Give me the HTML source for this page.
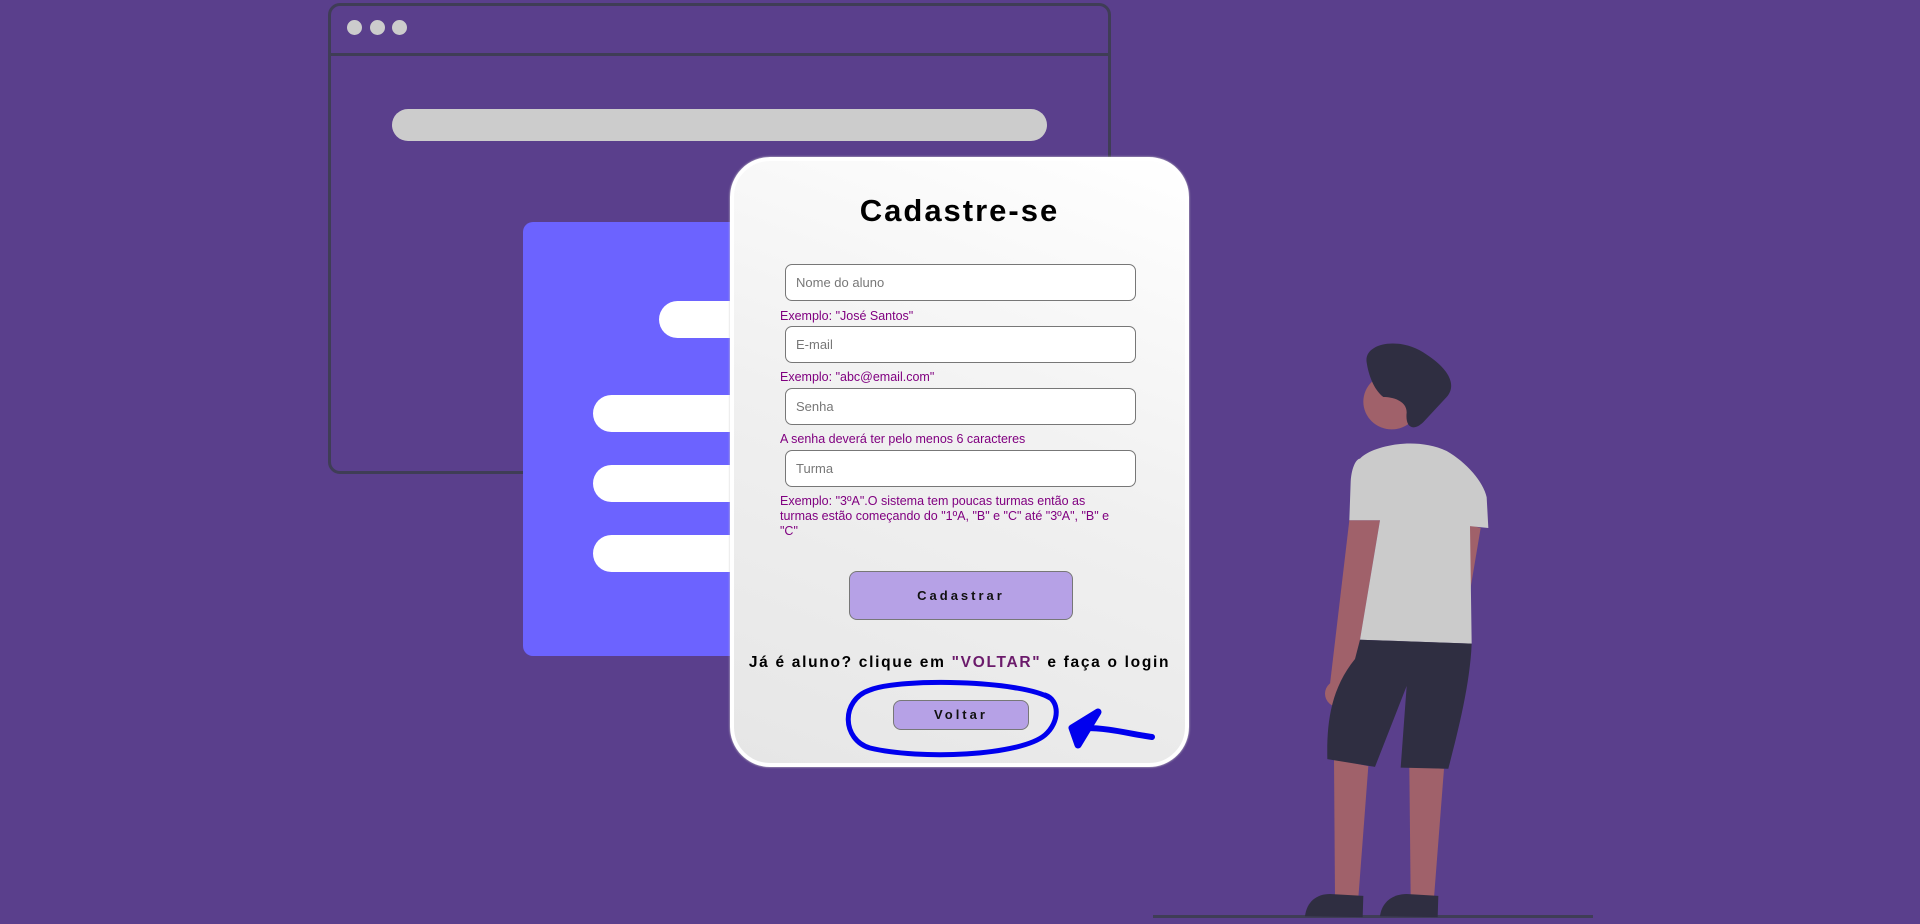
<!DOCTYPE html>
<html><head><meta charset="utf-8"><style>
*{margin:0;padding:0;box-sizing:border-box}
body{width:1920px;height:924px;background:#5a3f8c;position:relative;overflow:hidden;font-family:"Liberation Sans",sans-serif}
.abs{position:absolute}
.win{left:328px;top:3px;width:783px;height:471px;border:3px solid #3f3d56;border-radius:12px}
.bar{left:331px;top:53px;width:777px;height:3px;background:#3f3d56}
.dot{width:15px;height:15px;border-radius:50%;background:#ccc;top:20px}
.wb{background:#fff;border-radius:20px;height:37px}
.card{left:730px;top:157px;width:459px;height:610px;border:4px solid #fff;border-radius:40px;background:linear-gradient(200deg,#fff 0%,#f0f0f0 50%,#e6e6e6 100%);box-shadow:0 0 2px #ccc}
h1{position:absolute;left:0;right:0;top:32px;text-align:center;font-size:31px;letter-spacing:2px;font-weight:bold;color:#000}
.in{position:absolute;left:51px;width:351px;height:37px;border:1px solid #777;border-radius:7px;background:#fff;font-size:13px;color:#777;padding:10px 10px}
.hint{position:absolute;left:46px;font-size:12.5px;color:#800080;line-height:15px;width:345px}
.btn{position:absolute;background:#b6a1e6;border:1px solid #777;border-radius:8px;font-weight:bold;letter-spacing:3px;color:#111;text-align:center}
</style></head><body>
<div class="abs win"></div><div class="abs bar"></div>
<div class="abs dot" style="left:347px"></div><div class="abs dot" style="left:370px"></div><div class="abs dot" style="left:392px"></div>
<div class="abs" style="left:392px;top:109px;width:655px;height:32px;border-radius:16px;background:#ccc"></div>
<div class="abs" style="left:523px;top:222px;width:260px;height:434px;border-radius:10px;background:#6c63ff"></div>
<div class="abs wb" style="left:659px;top:301px;width:200px"></div>
<div class="abs wb" style="left:593px;top:395px;width:200px"></div>
<div class="abs wb" style="left:593px;top:465px;width:200px"></div>
<div class="abs wb" style="left:593px;top:535px;width:200px"></div>
<div class="abs card">
<h1>Cadastre-se</h1>
<div class="in" style="top:103px">Nome do aluno</div>
<div class="hint" style="top:148px">Exemplo: "José Santos"</div>
<div class="in" style="top:165px">E-mail</div>
<div class="hint" style="top:209px">Exemplo: "abc@email.com"</div>
<div class="in" style="top:227px">Senha</div>
<div class="hint" style="top:271px">A senha deverá ter pelo menos 6 caracteres</div>
<div class="in" style="top:289px">Turma</div>
<div class="hint" style="top:333px">Exemplo: "3ºA".O sistema tem poucas turmas então as turmas estão começando do "1ºA, "B" e "C" até "3ºA", "B" e "C"</div>
<div class="btn" style="left:115px;top:410px;width:224px;height:49px;line-height:47px;font-size:13px">Cadastrar</div>
<div style="position:absolute;left:0;right:0;top:493px;text-align:center;font-weight:bold;font-size:15.5px;letter-spacing:1.7px;color:#000">Já é aluno? clique em <span style="color:#6b1a6b">"VOLTAR"</span> e faça o login</div>
<div class="btn" style="left:159px;top:539px;width:136px;height:30px;line-height:28px;font-size:13px">Voltar</div>
</div>
<svg class="abs" style="left:0;top:0" width="1920" height="924">
<path d="M1050,698 C1020,680 900,678 870,690 C840,700 842,740 870,748 C920,760 1020,756 1045,735 C1060,722 1060,700 1045,695" fill="none" stroke="#0000ee" stroke-width="5" stroke-linecap="round"/>
<path d="M1152,737 C1130,734 1110,728 1085,728" fill="none" stroke="#0000ee" stroke-width="6" stroke-linecap="round"/>
<path d="M1098,712 L1072,728 L1078,745 Z" fill="#0000ee" stroke="#0000ee" stroke-width="7" stroke-linejoin="round"/>
<rect x="1153" y="915" width="440" height="3" fill="#3f3d56"/>
</svg>
<svg class="abs" style="left:1280px;top:320px" width="330" height="604" viewBox="0 0 990 1568" preserveAspectRatio="none">
<ellipse cx="335" cy="212" rx="85" ry="72" fill="#a0616a"/>
<path d="M260,110 C250,60 360,40 440,90 C510,130 530,170 500,200 L430,265 C400,290 375,280 380,240 C380,210 340,200 310,200 C280,180 265,140 260,110Z" fill="#2f2e41"/>
<path d="M208,520 L300,520 L218,945 L150,945Z" fill="#a0616a"/>
<path d="M560,530 L602,540 L565,730Z" fill="#a0616a"/>
<ellipse cx="180" cy="970" rx="45" ry="36" fill="#a0616a"/>
<path d="M162,1140 L265,1158 L235,1500 L165,1500Z" fill="#a0616a"/>
<path d="M388,1160 L492,1165 L462,1500 L392,1500Z" fill="#a0616a"/>
<path d="M240,360 C270,330 400,300 500,340 C560,370 610,420 620,460 L625,540 L570,535 L575,840 L240,830 L300,520 L208,520 L212,420 C215,380 230,360 240,360Z" fill="#cbcbcb"/>
<path d="M240,830 L575,840 C570,950 530,1080 505,1165 L362,1162 L380,950 L285,1160 L142,1140 C140,1050 150,960 225,880Z" fill="#2f2e41"/>
<path d="M75,1548 C80,1510 110,1490 150,1490 L250,1495 L248,1550Z" fill="#2f2e41"/>
<path d="M300,1548 C305,1510 340,1490 380,1490 L475,1495 L473,1550Z" fill="#2f2e41"/>
</svg>
</body></html>
